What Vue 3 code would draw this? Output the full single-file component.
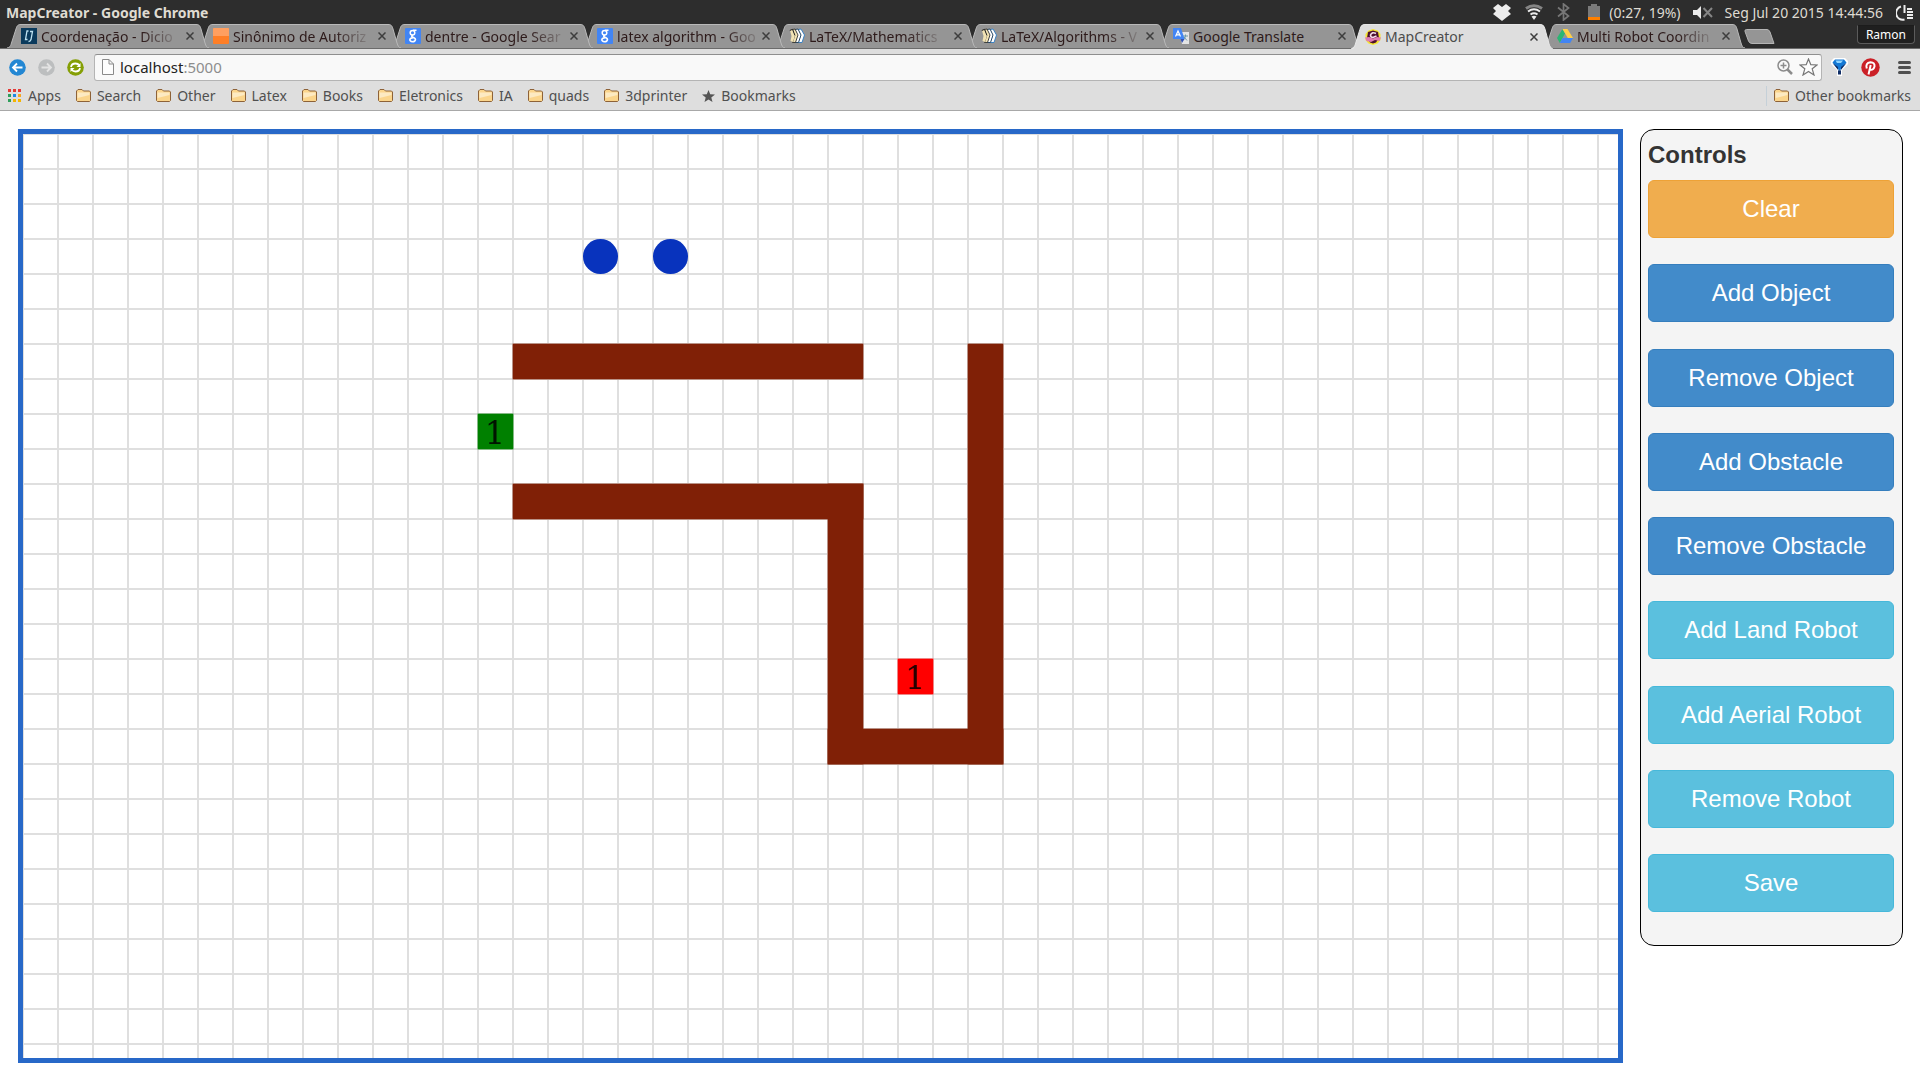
<script setup>
import { computed, ref } from 'vue'

const tabs = [
  { title: 'Coordenação - Dicio', icon: 'dicio', fade: true },
  { title: 'Sinônimo de Autoriz', icon: 'orange', fade: true },
  { title: 'dentre - Google Sear', icon: 'google', fade: true },
  { title: 'latex algorithm - Goo', icon: 'google', fade: true },
  { title: 'LaTeX/Mathematics', icon: 'books', fade: true },
  { title: 'LaTeX/Algorithms - V', icon: 'books', fade: true },
  { title: 'Google Translate', icon: 'translate' },
  { title: 'MapCreator', icon: 'map', active: true },
  { title: 'Multi Robot Coordin', icon: 'drive', fade: true },
]

const bookmarks = ['Search', 'Other', 'Latex', 'Books', 'Eletronics', 'IA', 'quads', '3dprinter']

const controls = [
  { label: 'Clear', kind: 'warning' },
  { label: 'Add Object', kind: 'primary' },
  { label: 'Remove Object', kind: 'primary' },
  { label: 'Add Obstacle', kind: 'primary' },
  { label: 'Remove Obstacle', kind: 'primary' },
  { label: 'Add Land Robot', kind: 'info' },
  { label: 'Add Aerial Robot', kind: 'info' },
  { label: 'Remove Robot', kind: 'info' },
  { label: 'Save', kind: 'info' },
]

const CELL = 35
// Runs of blocked cells: column, row, columns wide, rows tall
const walls = [
  [14, 6, 10, 1],
  [14, 10, 10, 1],
  [23, 10, 1, 8],
  [23, 17, 5, 1],
  [27, 6, 1, 12],
]
const robots = [[16, 3], [18, 3]]
const markers = [
  { col: 13, row: 8, color: '#008000', label: '1' },
  { col: 25, row: 15, color: '#ff0000', label: '1' },
]
const wallRects = computed(() =>
  walls.map(([c, r, w, h]) => ({ x: c * CELL, y: r * CELL, width: w * CELL, height: h * CELL }))
)
const address = ref('localhost:5000')
const dotColors = ['#e53935', '#e53935', '#e53935', '#2e9e5b', '#1e88e5', '#f5a623', '#2e9e5b', '#f5b400', '#f5b400']
</script>

<template>
  <div class="screen">
    <header class="titlebar">
      <span class="window-title">MapCreator - Google Chrome</span>
      <div class="status">
        <svg class="s-dropbox" width="18" height="17" viewBox="0 0 18 17"><path fill="#ececec" d="M5 0 9 3 13 0 18 4 15 7 18 10 14 13 9 17 4 13 0 10 3 7 0 4Z" /></svg>
        <svg class="s-wifi" width="18" height="16" viewBox="0 0 18 16" fill="none"><path stroke="#858585" stroke-width="3" d="M1 4.500Q9-1 17 4.500" /><path stroke="#ececec" stroke-width="2" d="M3 7.500Q9 3 15 7.500M5.500 10.500Q9 8 12.500 10.500" /><path fill="#ececec" d="M6.500 12.500Q9 11 11.500 12.500L9 16Z" /></svg>
        <svg class="s-bt" width="13" height="18" viewBox="0 0 13 18"><path fill="none" stroke="#777" stroke-width="1.700" d="M1 4.500 11.500 13 6.500 17V1L11.500 5 1 13.500" /></svg>
        <svg class="s-bat" width="12" height="16" viewBox="0 0 12 16"><path fill="#7b7b7b" d="M3 0H9V2H12V13H0V2H3Z" /><path fill="#ff8000" d="M0 13H12V16H0Z" /></svg>
        <span class="s-battery-text">(0:27, 19%)</span>
        <svg class="s-sound" width="20" height="13" viewBox="0 0 20 13"><path fill="#ececec" d="M0 4H4L8 0V13L4 9H0Z" /><path fill="none" stroke="#858585" stroke-width="2" d="M10.500 2 19 11M19 2 10.500 11" /></svg>
        <time class="s-clock">Seg Jul 20 2015 14:44:56</time>
        <svg class="s-power" width="17" height="17" viewBox="0 0 17 17"><path fill="none" stroke="#ececec" stroke-width="2" d="M5 2.500A6.500 6.500 0 0 0 8.500 15.500M8.500 1V9M11 5H16M11 8H17M11 11H17M11 14H17" /></svg>
      </div>
    </header>

    <nav class="tabstrip" aria-label="Tabs">
      <div v-for="(tab, i) in tabs" :key="i" class="tab" :class="{ active: tab.active }" :style="{ zIndex: tab.active ? 20 : 10 - i }">
        <svg class="tab-shape" viewBox="0 0 202 24" preserveAspectRatio="none" aria-hidden="true">
          <path class="tab-fill" d="M0 24C3 23.500 3.500 22 4 20.500L9 5C10 1.500 11 .5 14 .5H189C192 .5 193 1.500 194 5L198 19C199 22 199.500 23.500 202 24Z" />
          <path class="tab-line" d="M0 24C3 23.500 3.500 22 4 20.500L9 5C10 1.500 11 .5 14 .5H189C192 .5 193 1.500 194 5L198 19C199 22 199.500 23.500 202 24" />
        </svg>
        <svg class="favicon" width="16" height="16" viewBox="0 0 16 16" aria-hidden="true">
          <template v-if="tab.icon === 'dicio'">
            <path fill="#0a3a5c" d="M0 0H16V16H0Z" /><path fill="none" stroke="#bfe3f2" stroke-width="1.300" d="M7.500 3H6L4.500 11.500H6.500M9 3.500H11.500L10 11.500Q9.500 13.500 7.500 13.500" />
          </template>
          <template v-else-if="tab.icon === 'orange'">
            <rect width="16" height="16" rx="1" fill="#ff7f27" /><path fill="#ff9f60" d="M0 1Q0 0 1 0H15Q16 0 16 1V8H0Z" />
          </template>
          <template v-else-if="tab.icon === 'google'">
            <rect width="16" height="16" rx="1" fill="#4285f4" /><g fill="none" stroke="#fff" stroke-width="1.500"><ellipse cx="7.500" cy="4.800" rx="2.300" ry="2.300" /><path d="M8 2.300H11.500M8 7.200Q5.500 8 7.500 9 10.500 10 10.500 11.700 10 13.700 7.500 13.700 4.800 13.500 4.800 11.800 5 10 8 9.800" /></g>
          </template>
          <template v-else-if="tab.icon === 'books'">
            <path fill="#fff" stroke="#3b82c4" d="M9 1.500 12 1 15.500 7 13 14.500 9 14.500 11.500 8Z" /><path fill="#fff" stroke="#2a4a66" d="M6 1.500 9 1 12 7 9.500 14.500 6 14.500 8 8Z" /><path fill="#f2e3b4" stroke="#222" stroke-width=".8" d="M3.500 1.500 6 1 9 7 6.500 14.500 3.500 14.500 5.500 8Z" /><path fill="#f2e3b4" d="M1 2.500 3.500 1.500 6 7.500 4 14 1.500 13 2.500 8Z" /><path fill="none" stroke="#222" d="M.8 2.500 3.500 1.300 6 7.500" />
          </template>
          <template v-else-if="tab.icon === 'translate'">
            <path fill="#e4e4e4" d="M6 4H16V16H9Z" /><path fill="none" stroke="#6d9aa8" d="M9.500 8H15M12.500 6.500V8Q12 11 10 12M11 9 14 12.500" /><path fill="#4285f4" d="M0 0H8L11.500 11H0Z" /><path fill="#3352b5" d="M7.500 11H11.500L9 15Z" /><path fill="none" stroke="#fff" stroke-width="1.200" d="M2.500 8.500 5 3 7.500 8.500M3.500 6.800H6.500" />
          </template>
          <template v-else-if="tab.icon === 'map'">
            <path fill="#f5e531" d="M8 0 12.500 1.500 15.500 5 15.500 11 12.500 14.500 8 16 3.500 14.500 .5 11 .5 5 3.500 1.500Z" /><path fill="#4c1030" d="M3 3 8 1.500 13 3 14 9 11 13.500 8 14.500 5 13.500 2 9Z" /><path fill="none" stroke="#f3dce8" stroke-width="1.600" d="M11 4.500Q7 2.500 5.500 6 5.500 8.500 8 8.500L11.500 7" /><path fill="#e07ab0" d="M0 8.500 4 8 8 9.500 12 8 16 8.500 14.500 12 10 11 6 13 1.500 12Z" />
          </template>
          <template v-else>
            <path fill="#2bb673" d="M5.500 1 8 5.500 2.800 15 0 10Z" /><path fill="#ffcf48" d="M5.500 1H10.500L16 10H10.800Z" /><path fill="#4285f4" d="M5.500 10H16L13.200 15H2.800Z" />
          </template>
        </svg>
        <span class="tab-title" :class="{ fade: tab.fade }">{{ tab.title }}</span>
        <button class="tab-close" type="button" :aria-label="'Close ' + tab.title">
          <svg width="8" height="8" viewBox="0 0 8 8"><path fill="none" stroke="#3d3d3d" stroke-width="1.500" d="M.5 .5 7.500 7.500M7.500 .5 .5 7.500" /></svg>
        </button>
      </div>
      <button class="new-tab" type="button" aria-label="New tab">
        <svg width="31" height="15" viewBox="0 0 31 15"><path fill="#959595" stroke="#b5b5b5" d="M2.500 .5H23Q25 .5 26 3L30 14.500H8Q5.500 14.500 4.500 12L1 2.500Q.5 .5 2.500 .5Z" /></svg>
      </button>
      <button class="user" type="button">Ramon</button>
    </nav>

    <div class="toolbar">
      <button class="nav-btn" type="button" aria-label="Back"><svg width="17" height="17" viewBox="0 0 17 17"><circle cx="8.500" cy="8.500" r="8.300" fill="#2387d3" /><path fill="none" stroke="#fff" stroke-width="1.800" d="M13.500 8.500H4M8 4.500 4 8.500 8 12.500" /></svg></button>
      <button class="nav-btn" type="button" aria-label="Forward"><svg width="17" height="17" viewBox="0 0 17 17"><circle cx="8.500" cy="8.500" r="8.300" fill="#bcbebf" /><path fill="none" stroke="#e3e3e3" stroke-width="1.800" d="M3.500 8.500H13M9 4.500 13 8.500 9 12.500" /></svg></button>
      <button class="nav-btn" type="button" aria-label="Reload"><svg width="17" height="17" viewBox="0 0 17 17"><circle cx="8.500" cy="8.500" r="8.300" fill="#859f05" /><path fill="none" stroke="#fff" stroke-width="1.800" d="M4 8Q4.500 4.500 8.500 4.500 11 4.500 12.500 6.500M13 9Q12.500 12.500 8.500 12.500 6 12.500 4.500 10.500" /><path fill="#fff" d="M13.500 4V8H9.500ZM3.500 13V9H7.500Z" /></svg></button>
      <label class="omnibox">
        <svg width="12" height="16" viewBox="0 0 12 16" aria-hidden="true"><path fill="#fdfdfd" stroke="#8a8a8a" d="M.5 .5H7L11.500 5V15.500H.5ZM7 .5V5H11.500" /></svg>
        <span class="url-wrap">
          <input v-model="address" class="url" type="text" aria-label="Address" />
          <span class="url-text" aria-hidden="true">{{ address.split(':')[0] }}<i>:{{ address.split(':')[1] }}</i></span>
        </span>
        <svg width="16" height="16" viewBox="0 0 16 16" fill="none" stroke="#8c8c8c" aria-hidden="true"><circle cx="6.500" cy="6.500" r="5.500" stroke-width="1.500" /><path stroke-width="1.500" d="M3.500 6.500H9.500M6.500 3.500V9.500" /><path stroke-width="2.500" d="M10.500 10.500 15 15" /></svg>
        <svg width="19" height="18" viewBox="0 0 19 18" aria-hidden="true"><path fill="#fdfdfd" stroke="#757575" stroke-width="1.200" d="M9.500 1 11.800 6.700 18 7 13.200 10.800 15 17 9.500 13.500 4 17 5.800 10.800 1 7 7.200 6.700Z" /></svg>
      </label>
      <button class="ext" type="button" aria-label="Extension"><svg width="17" height="18" viewBox="0 0 17 18"><path fill="#fff" d="M3 0H14L17 3V6L11 12V18H6V12L0 6V3Z" /><path fill="#1478d4" d="M4 1.500H13L15.500 4.500 8.500 13 1.500 4.500Z" /><path fill="#8fd4ff" d="M4.500 2.500H12L10 5H6Z" /><path fill="#102d66" d="M1.500 5 7 9V16.500H10V9L15.500 5 9.500 12.500H7.500Z" /></svg></button>
      <button class="ext" type="button" aria-label="Pinterest"><svg width="19" height="19" viewBox="0 0 19 19"><circle cx="9.500" cy="9.500" r="9.200" fill="#cb2027" /><path fill="none" stroke="#fff" stroke-width="2" d="M5.800 10.500Q4 5 9.500 4.200 14 4.500 13.500 8.500 12.500 12.500 9 11.500M9.700 7 7.500 16.500" /></svg></button>
      <button class="ext menu" type="button" aria-label="Menu"><svg width="13" height="13" viewBox="0 0 13 13"><path stroke="#4f4f4f" stroke-width="3" stroke-linecap="round" d="M1.500 1.500H11.500M1.500 6.500H11.500M1.500 11.500H11.500" /></svg></button>
    </div>

    <nav class="bookmarks" aria-label="Bookmarks">
      <a class="bm" href="#"><svg width="14" height="14" viewBox="0 0 14 14"><rect v-for="(c, i) in dotColors" :key="i" :x="(i % 3) * 5" :y="Math.floor(i / 3) * 5" width="3" height="3" :fill="c" /></svg>Apps</a>
      <a v-for="b in bookmarks" :key="b" class="bm" href="#">
        <svg width="15" height="13" viewBox="0 0 15 13"><path fill="#fbd58c" stroke="#8d6238" d="M.5 11.500V2L2 .5H6L7.500 2H13.500L14.500 3V11.500L13.500 12.500H1.500Z" /><path fill="#fdeac2" d="M1.500 3.500H13.500V6L1.500 9Z" /></svg>{{ b }}
      </a>
      <a class="bm" href="#"><svg width="13" height="12" viewBox="0 0 13 12"><path fill="#555" d="M6.500 0 8.200 4.200 13 4.500 9.300 7.400 10.500 12 6.500 9.500 2.500 12 3.700 7.400 0 4.500 4.800 4.200Z" /></svg>Bookmarks</a>
      <a class="bm other" href="#"><svg width="15" height="13" viewBox="0 0 15 13"><path fill="#fbd58c" stroke="#8d6238" d="M.5 11.500V2L2 .5H6L7.500 2H13.500L14.500 3V11.500L13.500 12.500H1.500Z" /><path fill="#fdeac2" d="M1.500 3.500H13.500V6L1.500 9Z" /></svg>Other bookmarks</a>
    </nav>

    <main class="page">
      <section class="map" aria-label="Map">
        <svg class="map-svg" width="100%" height="100%">
          <defs>
            <pattern id="grid" :width="CELL" :height="CELL" patternUnits="userSpaceOnUse">
              <path d="M0 0H35V1H1V35H0ZM34 1H35V35H34ZM1 34H34V35H1Z" fill="#dfdfdf" />
            </pattern>
          </defs>
          <rect width="100%" height="100%" fill="url(#grid)" />
          <rect v-for="(w, i) in wallRects" :key="'w' + i" v-bind="w" fill="none" stroke="#802006" stroke-opacity="0.8" />
          <rect v-for="(w, i) in wallRects" :key="'f' + i" v-bind="w" fill="#802006" />
          <circle v-for="([c, r], i) in robots" :key="'r' + i" :cx="c * CELL + 17.5" :cy="r * CELL + 17.5" r="17.5" fill="#0833bd" />
          <g v-for="m in markers" :key="m.color">
            <rect :x="m.col * CELL" :y="m.row * CELL" :width="CELL" :height="CELL" :fill="m.color" :stroke="m.color" stroke-opacity="0.8" />
            <text class="marker" :x="m.col * CELL + 17" :y="m.row * CELL + 30" text-anchor="middle">{{ m.label }}</text>
          </g>
        </svg>
      </section>

      <aside class="panel">
        <h2>Controls</h2>
        <div class="buttons">
          <button v-for="c in controls" :key="c.label" class="btn" :class="c.kind" type="button">{{ c.label }}</button>
        </div>
      </aside>
    </main>
  </div>
</template>

<style>
body {
  margin: 0;
  background: #fff;
}
</style>

<style scoped>
* {
  box-sizing: border-box;
}
button {
  padding: 0;
  border: 0;
  background: none;
  font: inherit;
  color: inherit;
}
svg {
  display: block;
  flex: none;
}
.screen {
  display: flex;
  flex-direction: column;
  min-height: 100vh;
  font-family: "Noto Sans", "Open Sans", sans-serif;
  font-size: 14px;
}
.titlebar {
  display: flex;
  align-items: center;
  justify-content: space-between;
  height: 24px;
  padding: 0 7px 0 6px;
  background: #2d2d2d;
  color: #dfdbd2;
  white-space: nowrap;
}
.window-title {
  font-weight: 700;
}
.status {
  display: flex;
  align-items: center;
}
.s-dropbox,
.s-wifi {
  margin-right: 14px;
}
.s-bt {
  margin-right: 18px;
}
.s-bat {
  margin-right: 9px;
}
.s-battery-text,
.s-sound {
  margin-right: 12px;
}
.s-clock {
  margin-right: 13px;
}
.tabstrip {
  display: flex;
  height: 25px;
  padding-left: 7px;
  background: #2d2d2d;
  border-bottom: 1px solid #6b6b6b;
  isolation: isolate;
}
.tab {
  position: relative;
  display: flex;
  align-items: center;
  flex: 0 1 192px;
  min-width: 0;
  height: 24px;
  padding: 0 0 0 14px;
  color: #2d1a1a;
}
.tab.active {
  height: 25px;
  color: #4c4c4c;
}
.tab-shape {
  position: absolute;
  inset: 0 -10px 0 0;
  width: calc(100% + 10px);
  height: 100%;
}
.tab-fill {
  fill: #959595;
}
.tab-line {
  fill: none;
  stroke: #b9b9b9;
}
.active .tab-fill {
  fill: #dedede;
}
.active .tab-line {
  stroke: #e8e8e8;
}
.favicon,
.tab-title,
.tab-close {
  position: relative;
}
.tab-title {
  margin-left: 4px;
  white-space: nowrap;
}
.tab-title.fade {
  mask-image: linear-gradient(to right, #000 calc(100% - 32px), rgba(0, 0, 0, 0.2));
}
.tab-close {
  display: grid;
  place-items: center;
  width: 16px;
  height: 16px;
  margin: 0 1px 0 auto;
}
.new-tab {
  margin: 5px auto 4px 9px;
}
.user {
  height: 19px;
  margin: 1px 5px 0 0;
  padding: 0 8px;
  border: 1px solid #5b5b5b;
  border-top-color: #1c1c1c;
  border-radius: 0 0 4px 4px;
  background: #1f1f1f;
  color: #fff;
  font-size: 12px;
  line-height: 17px;
}
.toolbar {
  display: flex;
  align-items: center;
  height: 36px;
  padding: 0 9px;
  background: #dedede;
}
.nav-btn {
  margin-right: 12px;
}
.omnibox {
  display: flex;
  align-items: center;
  flex: 1;
  height: 27px;
  margin: 0 9px 0 -2px;
  padding: 0 3px 0 7px;
  border: 1px solid #b4b4b4;
  border-top-color: #8f8f8f;
  border-radius: 3px;
  background: #f9f9f9;
  gap: 6px;
}
.url-wrap {
  display: grid;
  flex: 1;
  font-size: 15px;
  line-height: 22px;
}
.url-wrap > * {
  grid-area: 1 / 1;
}
.url {
  padding: 0;
  border: 0;
  outline: 0;
  background: none;
  font: inherit;
  color: transparent;
  caret-color: #222;
}
.url-text {
  color: #222;
  pointer-events: none;
}
.url-text i {
  color: #8d8d8d;
  font-style: normal;
}
.ext {
  margin: 0 13px 0 0;
}
.ext.menu {
  margin: 0 0 0 5px;
}
.bookmarks {
  display: flex;
  align-items: center;
  gap: 15px;
  height: 26px;
  padding: 0 9px 4px 8px;
  border-bottom: 1px solid #a8a8a8;
  background: #dedede;
}
.bm {
  display: flex;
  align-items: center;
  gap: 6px;
  color: #505050;
  line-height: 20px;
  text-decoration: none;
  white-space: nowrap;
}
.bm.other {
  margin-left: auto;
  padding-left: 7px;
  border-left: 1px solid #c5d0d8;
}
.page {
  display: flex;
  align-items: flex-start;
  flex: 1;
  gap: 17px;
  padding: 18px 17px 17px 18px;
}
.map {
  flex: 1;
  align-self: stretch;
  position: relative;
  border: 5px solid #2868c8;
}
.map-svg {
  position: absolute;
  inset: 0;
}
.marker {
  font: 32px "DejaVu Serif", serif;
  fill: #000;
  fill-opacity: 0.85;
}
.panel {
  flex: 0 0 263px;
  padding: 7px 8px 33px 7px;
  border: 1px solid #000;
  border-radius: 14px;
  background: #f4f4f4;
  font-family: "Liberation Sans", Arial, sans-serif;
  font-size: 24px;
}
.panel h2 {
  margin: 0 0 7px;
  color: #333;
  font-size: 24px;
  line-height: 36px;
}
.buttons {
  display: flex;
  flex-direction: column;
  justify-content: space-between;
  min-height: 732px;
}
.btn {
  height: 58px;
  border: 1px solid;
  border-radius: 6px;
  color: #fff;
}
.warning {
  background: #f0ad4e;
  border-color: #eea236;
}
.primary {
  background: #428bca;
  border-color: #357ebd;
}
.info {
  background: #5bc0de;
  border-color: #46b8da;
}
</style>
